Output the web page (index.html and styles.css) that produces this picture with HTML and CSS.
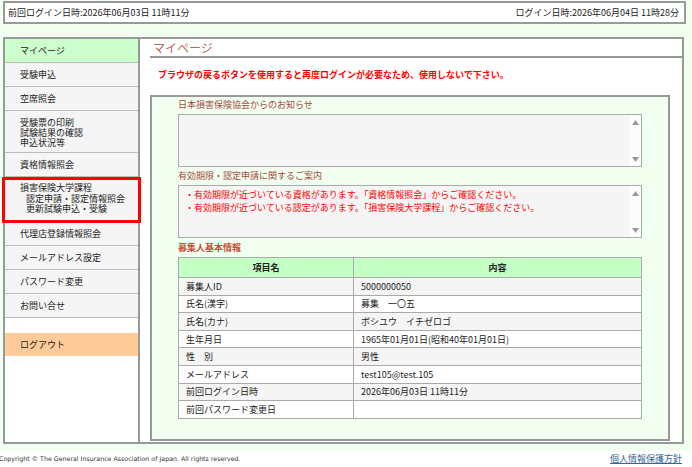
FILE: index.html
```html
<!DOCTYPE html>
<html lang="ja">
<head>
    <meta charset="UTF-8">
    <meta name="viewport" content="width=device-width, initial-scale=1.0">
    <title>マイページ</title>
    <link rel="stylesheet" href="styles.css">
</head>
<body>
    <div class="wrap">
        <div class="topbar">
            <span>前回ログイン日時:2026年06月03日 11時11分</span>
            <span>ログイン日時:2026年06月04日 11時28分</span>
        </div>
        <div class="frame">
            <ul class="menu">
                <li class="current">マイページ</li>
                <li>受験申込</li>
                <li>空席照会</li>
                <li class="multi">受験票の印刷<br>試験結果の確認<br>申込状況等</li>
                <li>資格情報照会</li>
                <li class="multi marked">損害保険大学課程<br><span class="sub">認定申請・認定情報照会</span><br><span class="sub">更新試験申込・受験</span></li>
                <li>代理店登録情報照会</li>
                <li>メールアドレス設定</li>
                <li>パスワード変更</li>
                <li>お問い合せ</li>
                <li class="blank"></li>
                <li class="logout">ログアウト</li>
            </ul>
            <div class="content">
                <h1 class="page-title">マイページ</h1>
                <p class="warning">ブラウザの戻るボタンを使用すると再度ログインが必要なため、使用しないで下さい。</p>
                <div class="panel">
                    <h2>日本損害保険協会からのお知らせ</h2>
                    <div class="notice">
                        <div class="notice-body"></div>
                        <div class="scroll">
                            <svg width="7" height="5" viewBox="0 0 7 5"><polygon points="0,5 3.5,0 7,5" fill="#999"/></svg>
                            <svg width="7" height="5" viewBox="0 0 7 5"><polygon points="0,0 3.5,5 7,0" fill="#999"/></svg>
                        </div>
                    </div>
                    <h2>有効期限・認定申請に関するご案内</h2>
                    <div class="notice">
                        <div class="notice-body alert">
                            ・有効期限が近づいている資格があります。「資格情報照会」からご確認ください。<br>
                            ・有効期限が近づいている認定があります。「損害保険大学課程」からご確認ください。
                        </div>
                        <div class="scroll">
                            <svg width="7" height="5" viewBox="0 0 7 5"><polygon points="0,5 3.5,0 7,5" fill="#999"/></svg>
                            <svg width="7" height="5" viewBox="0 0 7 5"><polygon points="0,0 3.5,5 7,0" fill="#999"/></svg>
                        </div>
                    </div>
                    <h2 class="strong">募集人基本情報</h2>
                    <table class="info">
                        <tr><th class="col-name">項目名</th><th>内容</th></tr>
                        <tr><td>募集人ID</td><td>5000000050</td></tr>
                        <tr><td>氏名(漢字)</td><td>募集　一〇五</td></tr>
                        <tr><td>氏名(カナ)</td><td>ボシユウ　イチゼロゴ</td></tr>
                        <tr><td>生年月日</td><td>1965年01月01日(昭和40年01月01日)</td></tr>
                        <tr><td>性　別</td><td>男性</td></tr>
                        <tr><td>メールアドレス</td><td>test105@test.105</td></tr>
                        <tr><td>前回ログイン日時</td><td>2026年06月03日 11時11分</td></tr>
                        <tr><td>前回パスワード変更日</td><td></td></tr>
                    </table>
                </div>
            </div>
        </div>
    </div>
    <div class="footer">
        <span class="copyright">Copyright © The General Insurance Association of Japan. All rights reserved.</span>
        <a href="#" class="policy">個人情報保護方針</a>
    </div>
</body>
</html>
```

FILE: styles.css
```css
body {
    margin: 0;
    background: #fff;
    font-family: "Noto Sans CJK JP", sans-serif;
    font-size: 9px;
    color: #222;
}
.wrap {
    background: #f0fff0;
    padding: 1px 6px 7px 3px;
}
.topbar {
    height: 19px;
    border: 2px solid #999;
    background: #fff;
    display: flex;
    justify-content: space-between;
    align-items: center;
    padding: 0 5px 0 3px;
}
.frame {
    margin-top: 13px;
    margin-right: 2px;
    height: 403px;
    border: 2px solid #999;
    background: #fff;
    display: flex;
}
.menu {
    width: 133px;
    flex: none;
    margin: 0;
    padding: 0;
    list-style: none;
    border-right: 2px solid #999;
}
.menu li {
    height: 23px;
    padding-left: 15px;
    display: flex;
    align-items: center;
    background: #f5f5f5;
    border-bottom: 1px solid #bbb;
}
.menu li.multi {
    display: block;
    height: 42px;
    padding-top: 7px;
    box-sizing: border-box;
    line-height: 10px;
}
.menu li.marked {
    position: relative;
    height: 45px;
    padding-top: 6px;
    line-height: 10.5px;
}
.menu li.marked::after {
    content: "";
    position: absolute;
    left: -3px;
    right: -3px;
    top: 0;
    bottom: -2px;
    border: 3px solid #f00;
}
.menu .sub {
    padding-left: 6px;
}
.menu li.current {
    background: #ccffcc;
}
.menu li.blank {
    height: 15px;
    background: #fff;
    border: none;
}
.menu li.logout {
    background: #ffcc99;
    border: none;
}
.content {
    flex: 1;
}
.page-title {
    margin: 0 0 0 10px;
    height: 17px;
    line-height: 17px;
    padding-left: 3px;
    font-size: 12px;
    font-weight: normal;
    color: #b8675c;
    border-bottom: 2px solid #999;
}
.warning {
    margin: 10px 0 0 18px;
    line-height: 14px;
    color: #f00;
    font-weight: bold;
}
.panel {
    margin: 13px 12px 0 10px;
    padding: 1px 26px 20px;
    background: #f0fff0;
    border: 2px solid #999;
}
.panel h2 {
    margin: 2px 0 0;
    height: 16px;
    line-height: 14px;
    font-size: 9px;
    font-weight: normal;
    color: #a4493c;
}
.panel h2:first-child {
    margin-top: 0;
}
.panel h2.strong {
    font-weight: bold;
    color: #cc4a36;
    height: 17px;
    line-height: 16px;
}
.notice {
    height: 51px;
    display: flex;
    background: #f5f5f5;
    border: 1px solid #aaa;
}
.notice-body {
    flex: 1;
    padding: 2px 6px;
    line-height: 13px;
}
.notice-body.alert {
    color: #f00;
}
.scroll {
    width: 12px;
    background: #fcfcfc;
    display: flex;
    flex-direction: column;
    justify-content: space-between;
    align-items: center;
    padding: 5px 0 4px;
}
.scroll svg {
    display: block;
}
.info {
    width: 100%;
    border-collapse: collapse;
}
.info th, .info td {
    border: 1px solid #aaa;
    text-align: left;
    padding: 0 7px;
    height: 17.6px;
    box-sizing: border-box;
}
.info th {
    height: 20px;
    text-align: center;
    background: #c4ffc4;
    font-weight: bold;
}
.info .col-name {
    width: 175px;
}
.info tr:nth-child(even) td {
    background: #f5f5f5;
}
.info tr:nth-child(odd) td {
    background: #fff;
}
.footer {
    height: 15px;
    display: flex;
    justify-content: space-between;
    align-items: center;
    padding-right: 10px;
}
.copyright {
    margin-left: -1px;
    font-family: "DejaVu Sans", sans-serif;
    font-size: 6.3px;
    color: #333;
}
.policy {
    color: #369;
    text-decoration: underline;
}
```
